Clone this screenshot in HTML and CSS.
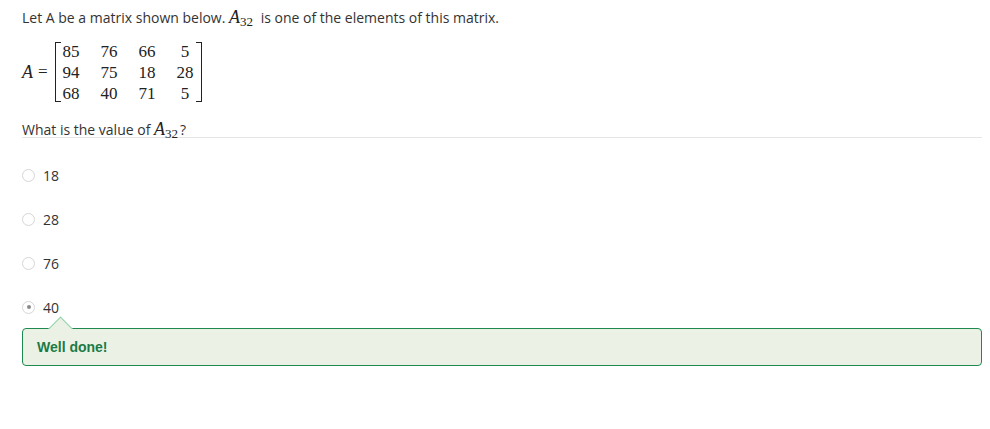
FILE: index.html
```html
<!DOCTYPE html>
<html>
<head>
<meta charset="utf-8">
<link rel="stylesheet" href="styles.css">
</head>
<body>
<div class="question">
  <p class="intro">Let A be a matrix shown below. <span class="math gap">A<sub>32</sub></span> is one of the elements of this matrix.</p>
  <div class="matrix-row">
    <span class="math lhs">A</span><span class="eq">=</span>
    <div class="matrix">
      <span>85</span><span>76</span><span>66</span><span>5</span>
      <span>94</span><span>75</span><span>18</span><span>28</span>
      <span>68</span><span>40</span><span>71</span><span>5</span>
    </div>
  </div>
  <p class="ask">What is the value of <span class="math small-gap">A<sub>32</sub></span>?</p>
  <div class="choices">
    <label class="choice"><span class="radio"></span><span>18</span></label>
    <label class="choice"><span class="radio"></span><span>28</span></label>
    <label class="choice"><span class="radio"></span><span>76</span></label>
    <label class="choice"><span class="radio checked"></span><span>40</span></label>
  </div>
  <div class="feedback">Well done!</div>
</div>
</body>
</html>
```
FILE: styles.css
```css
html, body { margin: 0; padding: 0; background: #fff; }
body {
  font-family: "Open Sans", sans-serif;
  font-size: 14px;
  color: #333;
}
.question { padding: 7px 8px 0 22px; }
.intro { margin: 0; line-height: 20px; }
.math { font-family: "Liberation Serif", serif; font-style: italic; font-size: 18px; color: #222; }
.math sub { font-style: normal; font-size: 13px; vertical-align: -3px; line-height: 0; }
.math.gap { margin-right: 4px; }
.math.small-gap { margin-right: 2px; }
.matrix-row {
  display: flex; align-items: center;
  margin-top: 14px; height: 60px;
  font-family: "Liberation Serif", serif; font-size: 17px; color: #222;
}
.lhs { font-size: 18px; }
.eq { margin: 0 7px 0 5px; font-size: 17px; }
.matrix {
  position: relative;
  display: grid;
  grid-template-columns: repeat(4, 17px);
  grid-auto-rows: 21px;
  column-gap: 21px;
  justify-items: center;
  align-content: center;
  line-height: 21px;
  height: 60px;
  box-sizing: border-box;
  padding: 0 7px 0 7px;
  border-left: 1.5px solid #222;
  border-right: 1.5px solid #222;
}
.matrix::before, .matrix::after {
  content: ""; position: absolute; left: 0; width: 5px; top: 0; bottom: 0;
  border-top: 1.5px solid #222; border-bottom: 1.5px solid #222;
}
.matrix::after { left: auto; right: 0; }
.ask {
  margin: 20px 0 0 0; line-height: 15px;
  border-bottom: 1px solid #e6e6e6;
}
.choices { display: flex; flex-direction: column; gap: 26px; margin-top: 28px; }
.choice { display: flex; align-items: center; gap: 8px; height: 18px; }
.radio {
  width: 11px; height: 11px; border-radius: 50%;
  border: 1px solid #d6d6d6;
  display: flex; align-items: center; justify-content: center;
}
.radio.checked::after { content: ""; width: 4px; height: 4px; border-radius: 50%; background: #8a8a8a; }
.feedback {
  position: relative;
  margin-top: 12px;
  height: 38px; box-sizing: border-box;
  border: 1px solid #1f8a50; border-radius: 4px;
  background: #ebf2e5;
  color: #1c7a45;
  font-family: "Liberation Sans", sans-serif; font-weight: bold; font-size: 14px;
  padding: 10px 14px;
  line-height: 16px;
}
.feedback::before {
  content: ""; position: absolute; left: 29px; top: -9px;
  width: 16px; height: 16px; background: #ebf2e5;
  border-left: 1px solid #8fd4a9; border-top: 1px solid #8fd4a9;
  transform: rotate(45deg);
}
```
